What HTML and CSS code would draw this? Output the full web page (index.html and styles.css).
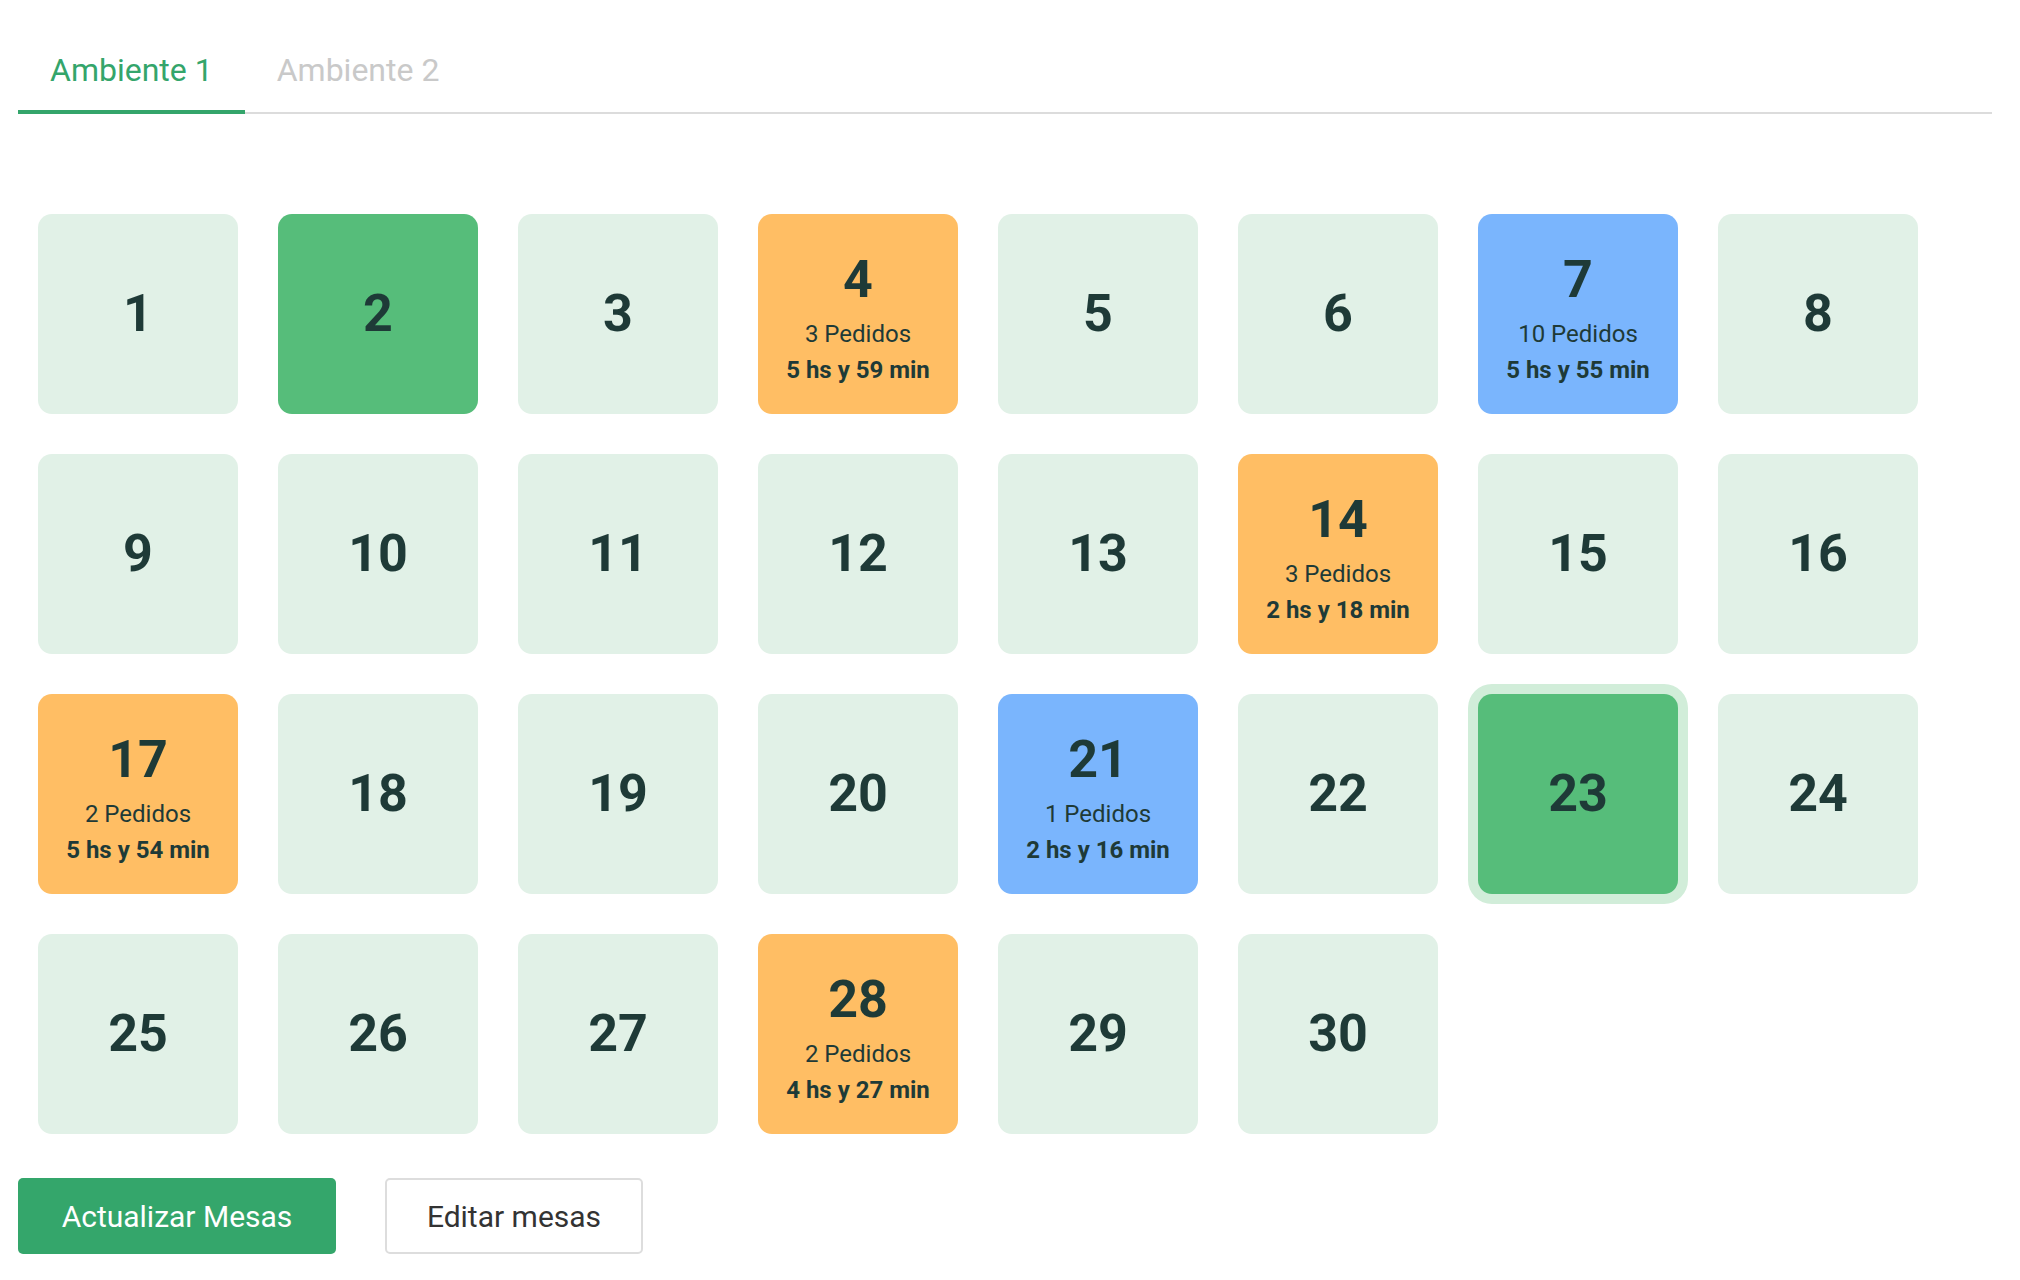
FILE: index.html
```html
<!DOCTYPE html>
<html lang="es">
<head>
<meta charset="utf-8">
<title>Mesas</title>
<link rel="stylesheet" href="styles.css">
</head>
<body>
<div class="page">
  <div class="tabs">
    <div class="tab active">Ambiente 1</div>
    <div class="tab">Ambiente 2</div>
  </div>
  <div class="grid">
    <div class="mesa"><div class="num">1</div></div>
    <div class="mesa green"><div class="num">2</div></div>
    <div class="mesa"><div class="num">3</div></div>
    <div class="mesa orange busy"><div class="num">4</div><div class="ped">3 Pedidos</div><div class="time">5 hs y 59 min</div></div>
    <div class="mesa"><div class="num">5</div></div>
    <div class="mesa"><div class="num">6</div></div>
    <div class="mesa blue busy"><div class="num">7</div><div class="ped">10 Pedidos</div><div class="time">5 hs y 55 min</div></div>
    <div class="mesa"><div class="num">8</div></div>

    <div class="mesa"><div class="num">9</div></div>
    <div class="mesa"><div class="num">10</div></div>
    <div class="mesa"><div class="num">11</div></div>
    <div class="mesa"><div class="num">12</div></div>
    <div class="mesa"><div class="num">13</div></div>
    <div class="mesa orange busy"><div class="num">14</div><div class="ped">3 Pedidos</div><div class="time">2 hs y 18 min</div></div>
    <div class="mesa"><div class="num">15</div></div>
    <div class="mesa"><div class="num">16</div></div>

    <div class="mesa orange busy"><div class="num">17</div><div class="ped">2 Pedidos</div><div class="time">5 hs y 54 min</div></div>
    <div class="mesa"><div class="num">18</div></div>
    <div class="mesa"><div class="num">19</div></div>
    <div class="mesa"><div class="num">20</div></div>
    <div class="mesa blue busy"><div class="num">21</div><div class="ped">1 Pedidos</div><div class="time">2 hs y 16 min</div></div>
    <div class="mesa"><div class="num">22</div></div>
    <div class="mesa green selected"><div class="num">23</div></div>
    <div class="mesa"><div class="num">24</div></div>

    <div class="mesa"><div class="num">25</div></div>
    <div class="mesa"><div class="num">26</div></div>
    <div class="mesa"><div class="num">27</div></div>
    <div class="mesa orange busy"><div class="num">28</div><div class="ped">2 Pedidos</div><div class="time">4 hs y 27 min</div></div>
    <div class="mesa"><div class="num">29</div></div>
    <div class="mesa"><div class="num">30</div></div>
  </div>
  <div class="actions">
    <button class="btn btn-primary">Actualizar Mesas</button>
    <button class="btn btn-outline">Editar mesas</button>
  </div>
</div>
</body>
</html>
```

FILE: styles.css
```css
html, body {
  margin: 0;
  padding: 0;
  background: #ffffff;
}
body {
  font-family: Roboto, "Liberation Sans", Arial, sans-serif;
  color: #1e3a37;
}
.page {
  padding: 0 28px 0 18px;
}
.tabs {
  display: flex;
  border-bottom: 2px solid #dcdcdc;
}
.tab {
  font-size: 32px;
  line-height: 40px;
  padding: 50px 32px 20px;
  border-bottom: 4px solid transparent;
  margin-bottom: -2px;
  color: #c9c9c9;
}
.tab.active {
  color: #34a56b;
  border-bottom-color: #34a56b;
}
.grid {
  display: grid;
  grid-template-columns: repeat(8, 200px);
  grid-auto-rows: 200px;
  gap: 40px;
  margin-top: 100px;
  padding-left: 20px;
}
.mesa {
  background: #e1f1e7;
  border-radius: 14px;
  display: flex;
  flex-direction: column;
  align-items: center;
  justify-content: center;
  text-align: center;
  box-sizing: border-box;
}
.mesa.busy {
  padding-top: 9px;
}
.mesa.green { background: #56bd7a; }
.mesa.orange { background: #ffbe64; }
.mesa.blue { background: #7ab5fd; }
.mesa.selected {
  box-shadow: 0 0 0 10px #d1edd9;
}
.num {
  font-size: 52px;
  font-weight: 700;
  line-height: 60px;
}
.ped {
  font-size: 24px;
  line-height: 36px;
  margin-top: 6px;
}
.time {
  font-size: 24px;
  font-weight: 700;
  line-height: 36px;
}
.actions {
  display: flex;
  gap: 49px;
  margin-top: 44px;
}
.btn {
  font-family: Roboto, "Liberation Sans", Arial, sans-serif;
  font-size: 30px;
  height: 76px;
  border-radius: 5px;
  padding: 0;
  white-space: nowrap;
  cursor: pointer;
  box-sizing: border-box;
}
.btn-primary {
  background: #34a66b;
  color: #ffffff;
  border: none;
  width: 318px;
}
.btn-outline {
  background: #ffffff;
  color: #333333;
  border: 2px solid #dddddd;
  width: 258px;
}
```
